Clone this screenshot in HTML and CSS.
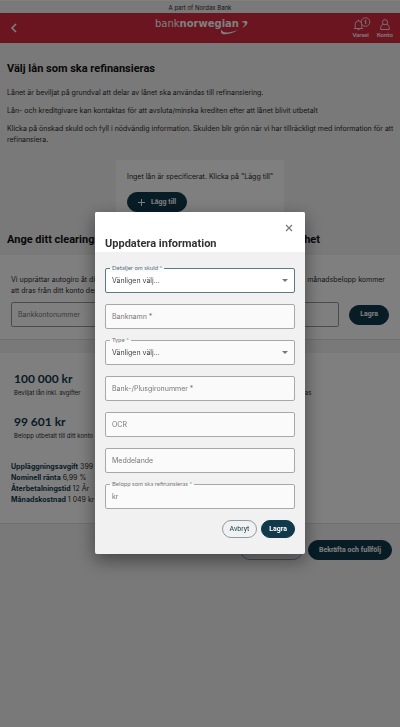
FILE: index.html
```html
<!DOCTYPE html>
<html lang="sv">
<head>
    <meta charset="UTF-8">
    <meta name="viewport" content="width=device-width, initial-scale=1.0">
    <title>Bank Norwegian</title>
    <link rel="stylesheet" href="styles.css">
</head>
<body>
    <div class="topbar">A part of Nordax Bank</div>
    <header class="header">
        <button class="back" aria-label="Tillbaka">
            <svg width="8" height="10" viewBox="0 0 8 10"><path d="M6 1 2 5l4 4" fill="none" stroke="currentColor" stroke-width="1.6"/></svg>
        </button>
        <a class="logo" href="#">bank<b>norwegian</b>
            <svg class="swoosh" width="28" height="16" viewBox="0 0 28 16">
                <path d="M21 2.200C23 1 27.500.2 27.500 2.500c0 2-2 3.700-5.500 5.700 1.800-1.800 3-3.500 2.800-4.700-.2-1.200-2-1.300-3.800-1.300z" fill="currentColor"/>
                <path d="M1.500 9.500c-1.500 3 0 5 4 4.700 4-.3 8.500-1.700 12.500-4.200-4 1.500-8 2.500-11 2.500-3.500 0-5-1-5.500-3z" fill="currentColor"/>
            </svg>
        </a>
        <nav class="nav">
            <a href="#">
                <svg width="20" height="14" viewBox="0 0 20 14" fill="none" stroke="currentColor" stroke-width=".8">
                    <path d="M3 11.500h9M4.200 11.300V7.500c0-2.200 1.200-3.500 3.300-3.500s3.300 1.300 3.300 3.500v3.800M6.500 12c.2 1.200 1.800 1.200 2 0M7.500 2.700V4"/>
                    <circle cx="14.500" cy="5" r="4.300" class="count-bg"/>
                    <path d="M13.700 3.800l1-.8v4.200" stroke-width="1"/>
                </svg>
                Varsel
            </a>
            <a href="#">
                <svg width="12" height="14" viewBox="0 0 12 14" fill="none" stroke="currentColor" stroke-width=".8">
                    <circle cx="6" cy="5.200" r="2.600"/>
                    <path d="M4.200 7.300C2.300 7.800 1.700 9 1.700 12.500h8.600C10.300 9 9.700 7.800 7.800 7.300"/>
                </svg>
                Konto
            </a>
        </nav>
    </header>

    <main>
        <section class="intro">
            <h1>Välj lån som ska refinansieras</h1>
            <p>Lånet är beviljat på grundval att delar av lånet ska användas till refinansiering.</p>
            <p>Lån- och kreditgivare kan kontaktas för att avsluta/minska krediten efter att lånet blivit utbetalt</p>
            <p>Klicka på önskad skuld och fyll i nödvändig information. Skulden blir grön när vi har tillräckligt med information för att refinansiera.</p>
        </section>

        <div class="card">
            <p>Inget lån är specificerat. Klicka på "Lägg till"</p>
            <button class="btn btn-add">
                <svg width="7" height="7" viewBox="0 0 7 7"><path d="M3.500 0v7M0 3.500h7" stroke="currentColor"/></svg>
                Lägg till
            </button>
        </div>

        <h2 class="split-line"><span>Ange ditt clearing-</span><span>kontonummer i enhet</span></h2>

        <section class="account">
            <div class="account-text">
                <div class="split-line"><span>Vi upprättar autogiro åt dig</span><span>att ditt månadsbelopp kommer</span></div>
                <div>att dras från ditt konto den</div>
            </div>
            <form class="account-form">
                <input type="text" placeholder="Bankkontonummer" aria-label="Bankkontonummer">
                <button type="button" class="btn">Lagra</button>
            </form>
        </section>

        <section class="summary">
            <div class="amounts">
                <div><strong>100 000 kr</strong><span>Beviljat lån inkl. avgifter</span></div>
                <div class="amount-end"><span>Belopp som refinansieras</span></div>
            </div>
            <div class="amounts">
                <div><strong>99 601 kr</strong><span>Belopp utbetalt till ditt konto</span></div>
            </div>
            <ul class="terms">
                <li><b>Uppläggningsavgift</b> 399 kr</li>
                <li><b>Nominell ränta</b> 6,99 %</li>
                <li><b>Återbetalningstid</b> 12 År</li>
                <li><b>Månadskostnad</b> 1 049 kr</li>
            </ul>
        </section>

        <div class="page-actions">
            <button class="btn btn-outline" aria-label="Tillbaka"></button>
            <button class="btn">Bekräfta och fullfölj</button>
        </div>
    </main>

    <div class="overlay">
        <div class="modal" role="dialog" aria-labelledby="modalTitle">
            <div class="modal-header">
                <button class="close" aria-label="Stäng">
                    <svg width="8" height="8" viewBox="0 0 8 8"><path d="M1 1l6 6M7 1 1 7" stroke="currentColor" stroke-width="1.2"/></svg>
                </button>
                <h2 id="modalTitle">Uppdatera information</h2>
            </div>
            <form class="modal-body">
                <div class="field active">
                    <select id="detaljer"><option>Vänligen välj...</option></select>
                    <label class="label-top" for="detaljer">Detaljer om skuld *</label>
                </div>
                <div class="field">
                    <input type="text" id="banknamn">
                    <label for="banknamn">Banknamn *</label>
                </div>
                <div class="field">
                    <select id="type"><option>Vänligen välj...</option></select>
                    <label class="label-top" for="type">Type *</label>
                </div>
                <div class="field">
                    <input type="text" id="giro">
                    <label for="giro">Bank-/Plusgironummer *</label>
                </div>
                <div class="field">
                    <input type="text" id="ocr">
                    <label for="ocr">OCR</label>
                </div>
                <div class="field">
                    <input type="text" id="meddelande">
                    <label for="meddelande">Meddelande</label>
                </div>
                <div class="field">
                    <input type="text" id="belopp" value="kr">
                    <label class="label-top" for="belopp">Belopp som ska refinansieras *</label>
                </div>
                <div class="modal-actions">
                    <button type="button" class="btn btn-outline">Avbryt</button>
                    <button type="button" class="btn">Lagra</button>
                </div>
            </form>
        </div>
    </div>
</body>
</html>
```
FILE: styles.css
```css
* {
    box-sizing: border-box;
}

body {
    margin: 0;
    min-height: 100vh;
    background-color: #f2f2f2;
    color: #2b2b2b;
    font-family: Inter, "Liberation Sans", sans-serif;
    font-size: 7px;
    line-height: 11px;
}

h1, h2, p, ul {
    margin: 0;
    padding: 0;
}

h1, h2 {
    font-family: Roboto, sans-serif;
    font-size: 11px;
    line-height: 16px;
    font-weight: bold;
    color: #111;
}

button, input, select {
    font: inherit;
    color: inherit;
}

a {
    color: inherit;
    text-decoration: none;
}

.topbar {
    height: 13px;
    padding-top: 2px;
    border-top: 1px solid #fff;
    text-align: center;
    font-size: 6px;
    line-height: 10px;
}

/* Header */
.header {
    display: grid;
    grid-template-columns: 1fr auto 1fr;
    height: 30px;
    padding: 0 7px 0 10px;
    background-color: #d42a40;
    color: #fff;
}

.back {
    justify-self: start;
    padding: 0;
    border: none;
    background: none;
    line-height: 0;
}

.logo {
    position: relative;
    padding: 5px 9px 0 0;
    font-family: "DejaVu Sans", sans-serif;
    font-size: 10px;
    line-height: 12px;
}

.swoosh {
    position: absolute;
    right: 0;
    top: 7px;
}

.nav {
    display: flex;
    justify-self: end;
    gap: 6px;
    padding-top: 4px;
    font-family: Lato, sans-serif;
    font-size: 6px;
    line-height: 8px;
    font-weight: bold;
}

.nav a {
    display: flex;
    flex-direction: column;
    align-items: center;
}

.count-bg {
    fill: #d42a40;
}

/* Content */
.intro {
    padding: 18px 4px 0 7px;
}

.intro h1 {
    margin-bottom: 10px;
}

.intro p {
    margin-bottom: 7px;
}

.card {
    width: 42%;
    height: 64px;
    margin: 15px auto 0;
    padding: 11px;
    background-color: #fff;
}

.card p {
    margin-bottom: 10px;
    white-space: nowrap;
}

.btn {
    padding: 0 10px;
    height: 20px;
    border: 1px solid #10394c;
    border-radius: 10px;
    background-color: #10394c;
    color: #fff;
    font-family: Roboto, sans-serif;
    font-size: 7px;
    font-weight: bold;
}

.btn-add {
    display: flex;
    align-items: center;
    gap: 6px;
}

.btn-outline {
    background-color: transparent;
    border-color: #8b9da6;
    color: #10394c;
    font-weight: normal;
}

.split-line {
    display: flex;
    justify-content: space-between;
}

main > h2 {
    width: 80%;
    padding: 8px 0 7px 7px;
}

.account {
    padding: 19px 11px 12px;
    border-bottom: 1px solid #ddd;
    background-color: #fff;
}

.account-text {
    padding-right: 4px;
}

.account-form {
    display: flex;
    align-items: center;
    gap: 10px;
    margin-top: 6px;
}

.account-form input {
    flex: 1;
    height: 25px;
    padding: 0 6px;
    border: 1px solid #999;
    border-radius: 2px;
    background: none;
}

.account-form input::placeholder {
    color: #777;
}

.summary {
    margin-top: 13px;
    padding: 18px 11px;
    border-bottom: 1px solid #ddd;
    background-color: #fff;
}

.amounts {
    display: flex;
    justify-content: space-between;
    width: 80%;
    height: 43px;
    padding-left: 3px;
    font-size: 6px;
}

.amounts strong {
    display: block;
    font-family: Lato, sans-serif;
    font-size: 12px;
    line-height: 16px;
    color: #10394c;
}

.amount-end {
    padding-top: 16px;
    margin-right: 2px;
}

.terms {
    list-style-type: none;
    margin-top: 4px;
}

.terms b {
    color: #10394c;
}

.page-actions {
    display: flex;
    justify-content: flex-end;
    gap: 5px;
    padding: 16px 8px;
}

.page-actions .btn-outline {
    width: 63px;
}

/* Modal */
.overlay {
    position: fixed;
    inset: 0;
    display: flex;
    justify-content: center;
    align-items: flex-start;
    padding-top: 212px;
    background-color: rgba(0, 0, 0, 0.5);
}

.modal {
    width: 210px;
    border-radius: 2px;
    background-color: #f1f1f1;
    box-shadow: 0 6px 18px rgba(0, 0, 0, 0.45);
    overflow: hidden;
}

.modal-header {
    display: flex;
    flex-direction: column;
    height: 40px;
    padding: 12px 10px 0;
    background-color: #fff;
}

.modal-header h2 {
    margin-top: 4px;
    color: #333;
}

.close {
    align-self: flex-end;
    margin-right: 2px;
    padding: 0;
    border: none;
    background: none;
    line-height: 0;
    color: #777;
}

.modal-body {
    padding: 16px 10px;
}

.field {
    position: relative;
    margin-bottom: 11px;
}

.field input, .field select {
    display: block;
    width: 100%;
    height: 25px;
    padding: 0 6px;
    border: 1px solid #a8a8a8;
    border-radius: 2px;
    background-color: #fafafa;
    color: #444;
    appearance: none;
}

.field input {
    color: #777;
}

.field:has(select)::after {
    content: "";
    position: absolute;
    right: 7px;
    top: 11px;
    border: 3px solid transparent;
    border-top-color: #777;
    border-bottom: none;
}

.field label {
    position: absolute;
    left: 7px;
    top: 7px;
    color: #777;
}

.field .label-top {
    left: 5px;
    top: -4px;
    padding: 0 2px;
    background: linear-gradient(#f1f1f1 50%, #fafafa 50%);
    font-family: Lato, sans-serif;
    font-size: 6px;
    line-height: 8px;
}

.field.active select {
    border-color: #5b7987;
    background-color: #fff;
}

.field.active .label-top {
    color: #4b6c7b;
}

.modal-actions {
    display: flex;
    justify-content: flex-end;
    gap: 4px;
}

.modal-actions .btn {
    height: 18px;
    padding: 0 7px;
}
```
